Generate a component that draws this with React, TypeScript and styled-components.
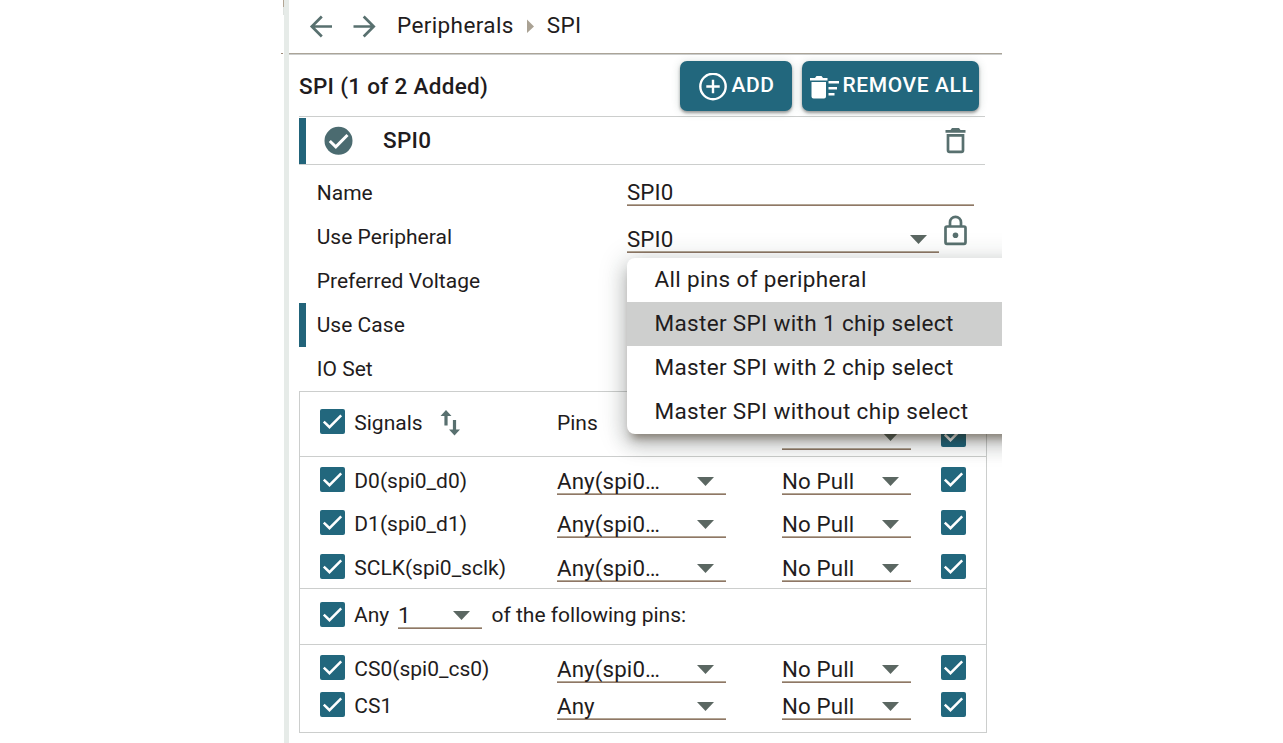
import React from "react";
import styled, { createGlobalStyle } from "styled-components";

const TEAL = "#22677d";
const ICON = "#58706f";
const LINE = "#cccecd";

const Global = createGlobalStyle`
  * { box-sizing: border-box; }
  body { margin: 0; background: #fff; overflow: hidden; }
`;

const Page = styled.div`
  width: 1283px;
  height: 743px;
  display: flex;
  background: #fff;
  color: #1f1c20;
  font-family: Roboto, "Liberation Sans", sans-serif;
`;

const Gutter = styled.div`
  width: 284px;
  display: flex;
  flex-direction: column;
  align-items: flex-end;
`;

const GutterEdge = styled.i`
  width: 1px;
  height: 15px;
  background: linear-gradient(#b3a695 7px, #dfe3e0 7px);
`;

const GutterTick = styled.i`
  width: 2px;
  height: 1px;
  margin: 38px 1px 0 0;
  background: #9d8a78;
`;

const Panel = styled.main`
  position: relative;
  width: 718px;
  height: 743px;
  border-left: 5px solid #e6ebe8;
  overflow: hidden;
`;

const NavBar = styled.header`
  height: 55px;
  display: flex;
  align-items: center;
  padding: 0 0 3px 20px;
  border-bottom: 1px solid ${LINE};
  box-shadow: inset 0 -1px 0 #aba498;
  font-size: 22.5px;
  line-height: 26px;
  letter-spacing: 0.38px;
`;

const Crumb = styled.span`
  padding-bottom: 2px;
`;

const NavIcon = styled.svg<{ $left?: number; $gap: number }>`
  flex: none;
  margin-left: ${(p) => p.$left ?? 0}px;
  margin-right: ${(p) => p.$gap}px;
`;

const Content = styled.div`
  padding: 0 15px 0 10px;
`;

const TitleRow = styled.div`
  height: 61px;
  width: 680px;
  display: flex;
  align-items: flex-start;
  padding-top: 6px;
  gap: 10px;
`;

const Title = styled.h1`
  flex: 1;
  margin: 0;
  font-size: 22.5px;
  font-weight: 500;
  line-height: 51px;
  letter-spacing: 0.31px;
`;

const Button = styled.button<{ $width: number }>`
  width: ${(p) => p.$width}px;
  height: 50px;
  border: 0;
  padding: 0 0 2px 2px;
  border-radius: 7px;
  background: ${TEAL};
  color: #fff;
  display: flex;
  align-items: center;
  justify-content: center;
  font: 500 21px Roboto, sans-serif;
  letter-spacing: 0.6px;
  white-space: nowrap;
  box-shadow: 0 2px 3px rgba(0, 0, 0, 0.35), 0 1px 8px rgba(60, 90, 80, 0.22);
`;

const ButtonIcon = styled.svg<{ $gap: number }>`
  flex: none;
  position: relative;
  top: 2px;
  margin-right: ${(p) => p.$gap}px;
`;

const InstanceBar = styled.section`
  width: 686px;
  height: 49px;
  display: flex;
  align-items: center;
  border: solid ${LINE};
  border-width: 1px 0;
  padding-right: 19px;
`;

const Marker = styled.i`
  width: 7px;
  height: 46px;
  margin: 1px 18px 0 0;
  background: #22647a;
`;

const InstanceName = styled.h2`
  flex: 1;
  margin: 0 0 0 30px;
  font-size: 22.5px;
  font-weight: 500;
  line-height: 45px;
  letter-spacing: 0.3px;
`;

const Form = styled.div`
  padding-top: 6px;
`;

const FormRow = styled.div<{ $active?: boolean }>`
  height: 44px;
  display: flex;
  align-items: flex-start;
  padding-left: ${(p) => (p.$active ? 10.7 : 17.7)}px;
  border-left: ${(p) => (p.$active ? "7px solid #22647a" : "0")};
`;

const FormLabel = styled.label`
  width: 310.3px;
  font-size: 21px;
  line-height: 44px;
  letter-spacing: 0.03px;
`;

const Field = styled.div<{ $width: number; $top?: number }>`
  width: ${(p) => p.$width}px;
  height: 31px;
  flex: none;
  margin-top: ${(p) => p.$top ?? 0}px;
  padding: 6px 12px 0 0;
  border-bottom: 1px solid #8f7766;
  box-shadow: inset 0 -1px 0 #b3a695;
  display: flex;
  justify-content: space-between;
  font-size: 22.3px;
  line-height: 23px;
  letter-spacing: 0.13px;
  white-space: nowrap;
`;

const Caret = styled.i`
  width: 17px;
  height: 9px;
  margin-top: 7px;
  background: #5b6762;
  clip-path: polygon(0 0, 100% 0, 50% 100%);
`;

const LockIcon = styled.svg`
  margin-left: 5px;
`;

const Table = styled.section`
  width: 688px;
  height: 342px;
  border: 1px solid ${LINE};
`;

const Group = styled.div<{ $height: number; $top?: number }>`
  height: ${(p) => p.$height}px;
  padding: ${(p) => p.$top ?? 0}px 20px 0;
  border-bottom: 1px solid ${LINE};
  &:last-child { border-bottom: 0; }
`;

const PinRow = styled.div<{ $height: number; $top?: number }>`
  height: ${(p) => p.$height}px;
  margin-top: ${(p) => p.$top ?? 0}px;
  display: grid;
  grid-template-columns: 34px 203px 225px 159px 25px;
  align-items: center;
`;

const Cell = styled.span<{ $indent?: number }>`
  display: flex;
  align-items: center;
  padding: 4px 0 0 ${(p) => p.$indent ?? 0}px;
  font-size: 21px;
  line-height: 25px;
  white-space: nowrap;
`;

const SortIcon = styled.svg`
  margin: -1px 0 0 17px;
`;

const CountRow = styled.div`
  height: 51px;
  display: flex;
  align-items: center;
`;

const CountText = styled.span<{ $width?: number; $left?: number }>`
  width: ${(p) => (p.$width ? `${p.$width}px` : "auto")};
  margin-left: ${(p) => p.$left ?? 0}px;
  padding-top: 2px;
  font-size: 21px;
  line-height: 25px;
`;

const Box = styled.svg<{ $lift?: number; $gap?: number }>`
  display: block;
  flex: none;
  margin-top: ${(p) => p.$lift ?? 0}px;
  margin-right: ${(p) => p.$gap ?? 0}px;
`;

const Menu = styled.ul`
  position: absolute;
  left: 338px;
  top: 258px;
  width: 400px;
  margin: 0;
  padding: 0;
  list-style: none;
  background: #fff;
  border-radius: 8px;
  box-shadow: 0 9px 9px -5px rgba(50, 30, 10, 0.42), 0 10px 18px 2px rgba(0, 0, 0, 0.17),
    0 4px 26px 5px rgba(30, 50, 40, 0.15);
`;

const MenuItem = styled.li<{ $selected?: boolean }>`
  height: 44px;
  padding-left: 27.4px;
  background: ${(p) => (p.$selected ? "#cecfce" : "transparent")};
  font-size: 22.5px;
  line-height: 43px;
  letter-spacing: 0.35px;
`;

function Checkbox({ lift, gap }: { lift?: number; gap?: number }) {
  return (
    <Box width="25" height="25" viewBox="0 0 25 25" $lift={lift} $gap={gap}>
      <rect width="25" height="25" rx="2" fill={TEAL} />
      <path d="M3.8 12.6l5.7 5.6L21.2 6.3" fill="none" stroke="#fff" strokeWidth="2.5" />
    </Box>
  );
}

function Select({ width, value, top }: { width: number; value: string; top?: number }) {
  return (
    <Field $width={width} $top={top}>
      <span>{value}</span>
      <Caret />
    </Field>
  );
}

function Pin({ name, pin, height, top }: { name: string; pin: string; height: number; top?: number }) {
  return (
    <PinRow $height={height} $top={top}>
      <Checkbox />
      <Cell $indent={0.3}>{name}</Cell>
      <Select width={169} value={pin} />
      <Select width={129} value="No Pull" />
      <Checkbox />
    </PinRow>
  );
}

const useCases = [
  "All pins of peripheral",
  "Master SPI with 1 chip select",
  "Master SPI with 2 chip select",
  "Master SPI without chip select",
];

export default function App() {
  return (
    <Page>
      <Global />
      <Gutter>
        <GutterEdge />
        <GutterTick />
      </Gutter>
      <Panel>
        <NavBar>
          <NavIcon $gap={20} width="24" height="24" viewBox="0 0 24 24" fill="none" stroke={ICON} strokeWidth="2.7">
            <path d="M23 12.500H3M12.800 2.500L2.800 12.500l10 10" />
          </NavIcon>
          <NavIcon $gap={20} width="24" height="24" viewBox="0 0 24 24" fill="none" stroke={ICON} strokeWidth="2.7">
            <path d="M0.500 12.500h20M10.700 2.500l10 10-10 10" />
          </NavIcon>
          <Crumb>Peripherals</Crumb>
          <NavIcon $left={13} $gap={12} width="8" height="14" viewBox="0 0 8 14">
            <path d="M0 .5L7 7.500 0 14z" fill="#aaa294" />
          </NavIcon>
          <Crumb>SPI</Crumb>
        </NavBar>
        <Content>
          <TitleRow>
            <Title>SPI (1 of 2 Added)</Title>
            <Button $width={112}>
              <ButtonIcon $gap={4} width="28" height="28" viewBox="0 0 28 28" fill="none" stroke="#fff" strokeWidth="2.4">
                <circle cx="14" cy="13.5" r="12.7" />
                <path d="M14 6.800v13.400M7.300 13.500h13.400" />
              </ButtonIcon>
              ADD
            </Button>
            <Button $width={177}>
              <ButtonIcon $gap={4} width="29" height="23" viewBox="0 0 29 23" fill="#fff">
                <path d="M0 2h5l1.5-2h5L13 2h4.500v2.500H0zM1.500 6h14.500v14.500q0 2-2 2h-10.500q-2 0-2-2zM18.500 5H29v2.500H18.500zM18.500 11h8.500v2.500h-8.500zM18.500 17h6v2.500h-6z" />
              </ButtonIcon>
              REMOVE ALL
            </Button>
          </TitleRow>
          <InstanceBar>
            <Marker />
            <svg width="29" height="29" viewBox="0 0 29 29">
              <circle cx="14.500" cy="14.800" r="14" fill="#4b6b70" />
              <path d="M5.800 15l6 5.800L23.500 9" fill="none" stroke="#fff" strokeWidth="3" />
            </svg>
            <InstanceName>SPI0</InstanceName>
            <svg width="21" height="26" viewBox="0 0 21 26" fill={ICON}>
              <path d="M.5 2h5L7 0h7l1.500 2h5v2.800H.5z" />
              <path d="M3 7.300h15v15q0 1.500-1.500 1.500h-12Q3 23.800 3 22.300z" fill="none" stroke={ICON} strokeWidth="2.700" />
            </svg>
          </InstanceBar>
          <Form>
            <FormRow>
              <FormLabel>Name</FormLabel>
              <Field $width={347} $top={4}>SPI0</Field>
            </FormRow>
            <FormRow>
              <FormLabel>Use Peripheral</FormLabel>
              <Select width={312} value="SPI0" top={7} />
              <LockIcon width="23" height="31" viewBox="0 0 23 31" fill="none" stroke={ICON} strokeWidth="2.700">
                <rect x="1.500" y="11.500" width="20" height="17.300" rx="1.500" />
                <path d="M6 11V7.300a5.500 5.500 0 0 1 11 0V11" />
                <circle cx="11.500" cy="20.200" r="2.800" fill={ICON} stroke="none" />
              </LockIcon>
            </FormRow>
            <FormRow><FormLabel>Preferred Voltage</FormLabel></FormRow>
            <FormRow $active><FormLabel>Use Case</FormLabel></FormRow>
            <FormRow><FormLabel>IO Set</FormLabel></FormRow>
          </Form>
          <Table>
            <Group $height={65}>
              <PinRow $height={59}>
                <Checkbox />
                <Cell $indent={0.3}>
                  Signals
                  <SortIcon width="20" height="26" viewBox="0 0 20 26" fill={ICON}>
                    <path d="M6 0l5.500 6H7.600v9.500h-3.200V6H.5zM14.500 25.500L9 19.500h3.900V10h3.200v9.500h3.900z" />
                  </SortIcon>
                </Cell>
                <Cell>Pins</Cell>
                <Select width={129} value="" top={26} />
                <Checkbox lift={26} />
              </PinRow>
            </Group>
            <Group $height={132} $top={1}>
              <Pin name="D0(spi0_d0)" pin="Any(spi0…" height={43} />
              <Pin name="D1(spi0_d1)" pin="Any(spi0…" height={43} />
              <Pin name="SCLK(spi0_sclk)" pin="Any(spi0…" height={43} top={1} />
            </Group>
            <Group $height={56}>
              <CountRow>
                <Checkbox gap={9} />
                <CountText $width={44}>Any</CountText>
                <Select width={84} value="1" top={-2} />
                <CountText $left={9.5}>of the following pins:</CountText>
              </CountRow>
            </Group>
            <Group $height={87} $top={4}>
              <Pin name="CS0(spi0_cs0)" pin="Any(spi0…" height={37} />
              <Pin name="CS1" pin="Any" height={37} />
            </Group>
          </Table>
        </Content>
        <Menu>
          {useCases.map((item, i) => (
            <MenuItem key={item} $selected={i === 1}>{item}</MenuItem>
          ))}
        </Menu>
      </Panel>
    </Page>
  );
}
